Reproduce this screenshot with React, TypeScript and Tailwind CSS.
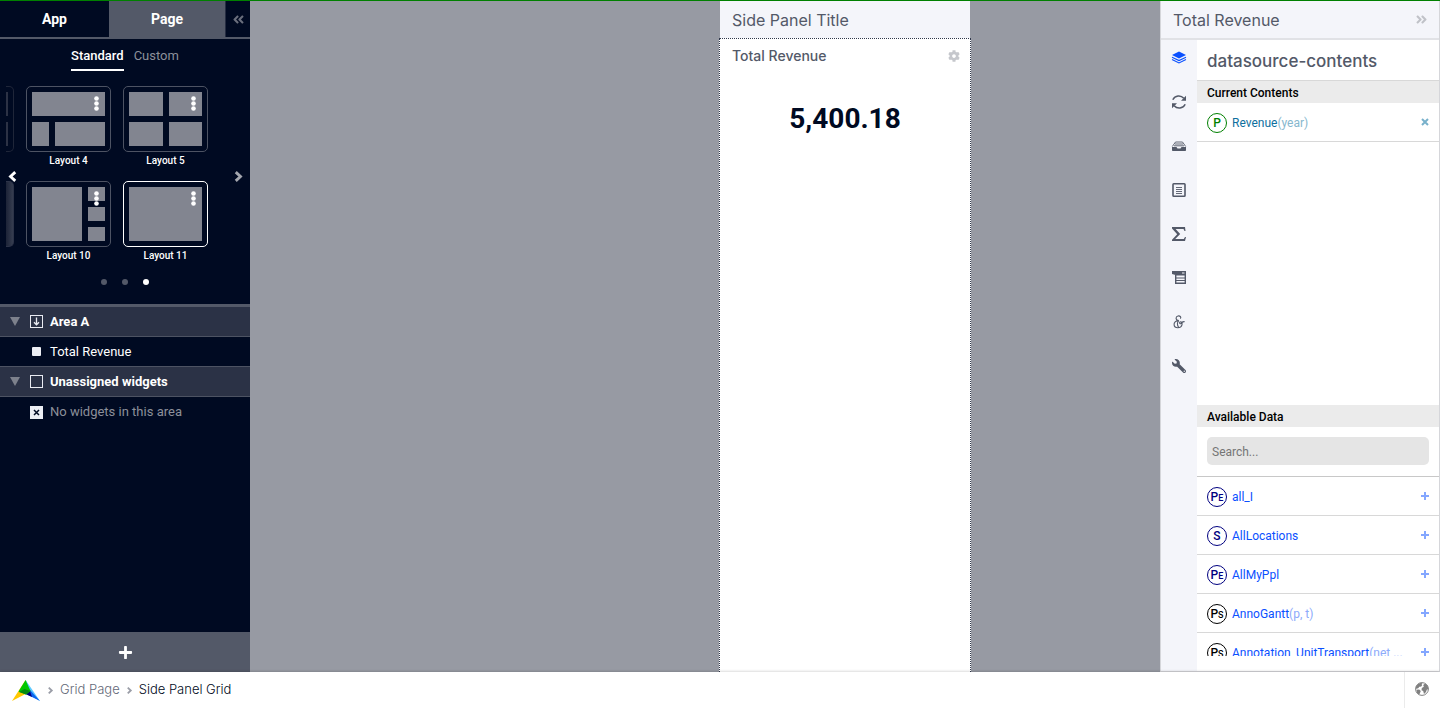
import React from 'react';
import { FaAngleDoubleLeft, FaAngleDoubleRight, FaCog, FaPlus, FaWrench } from 'react-icons/fa';

const DISPLAY = "font-[Inter,'Open_Sans',sans-serif]";

function Dots() {
  return (
    <svg width="5" height="15" viewBox="0 0 5 15" fill="#fff" className="absolute top-[9px] right-[11px]">
      <circle cx="2.5" cy="2.5" r="2.300" />
      <circle cx="2.5" cy="7.5" r="2.300" />
      <circle cx="2.5" cy="12.500" r="2.300" />
    </svg>
  );
}

function Chevron({ size, left }: { size: number; left?: boolean }) {
  return (
    <svg width={size} height={size} viewBox="0 0 10 10" fill="none" stroke="currentColor" strokeWidth="2.600">
      <path d={left ? 'M7.500 1L3.200 5 7.500 9' : 'M2.500 1L6.800 5 2.500 9'} />
    </svg>
  );
}

function LayoutCard({ name, selected, children }: { name: string; selected?: boolean; children: React.ReactNode }) {
  return (
    <button type="button" className="flex w-[85px] flex-col items-center">
      <span
        className={`relative flex h-[66px] w-full gap-[6px] rounded-[5px] border p-[5px] ${
          selected ? 'border-white' : 'border-[#4d5363]'
        }`}
      >
        {children}
        <Dots />
      </span>
      <span className="mt-px h-4 text-[10px] leading-4 font-medium text-white">{name}</span>
    </button>
  );
}

const block = 'bg-[#828590]';

function LayoutPicker() {
  return (
    <div className="flex h-[218px] shrink-0 flex-col">
      <div className="relative flex gap-3 pl-[6px]">
        <div className="flex w-2 flex-col gap-[29px] overflow-hidden">
          <div className="h-[66px] rounded-r-[5px] border border-l-0 border-[#1f2639] pt-[5px]">
            <div className="h-6 w-[2px] bg-[#2c3245]" />
            <div className="mt-[6px] h-6 w-[2px] bg-[#2c3245]" />
          </div>
          <div className="h-[66px] rounded-r-[5px] border border-l-0 border-[#2c3348] bg-gradient-to-r from-[#1c2337] to-[#363d50]" />
        </div>
        <div className="flex flex-col gap-3">
          <LayoutCard name="Layout 4">
            <span className="flex flex-1 flex-col gap-[6px]">
              <span className={`flex-1 ${block}`} />
              <span className="flex flex-1 gap-[6px]">
                <span className={`w-[17px] ${block}`} />
                <span className={`flex-1 ${block}`} />
              </span>
            </span>
          </LayoutCard>
          <LayoutCard name="Layout 10">
            <span className={`flex-1 ${block}`} />
            <span className="flex w-[17px] flex-col gap-[6px]">
              <span className={`flex-1 ${block}`} />
              <span className={`flex-1 ${block}`} />
              <span className={`flex-1 ${block}`} />
            </span>
          </LayoutCard>
        </div>
        <div className="flex flex-col gap-3">
          <LayoutCard name="Layout 5">
            <span className="grid w-[73px] grid-cols-2 gap-[6px]">
              <span className={block} />
              <span className={block} />
              <span className={block} />
              <span className={block} />
            </span>
          </LayoutCard>
          <LayoutCard name="Layout 11" selected>
            <span className={`flex-1 ${block}`} />
          </LayoutCard>
        </div>
        <button type="button" aria-label="Previous layouts" className="absolute top-[85px] left-[7px] text-white">
          <Chevron size={11} left />
        </button>
        <button type="button" aria-label="Next layouts" className="absolute top-[85px] right-[6px] text-[#a3a6ae]">
          <Chevron size={11} />
        </button>
      </div>
      <div className="mt-[15px] flex justify-center gap-[15px]">
        <button type="button" aria-label="Set 1" className="size-[6px] rounded-full bg-[#535968]" />
        <button type="button" aria-label="Set 2" className="size-[6px] rounded-full bg-[#535968]" />
        <button type="button" aria-label="Set 3" className="size-[6px] rounded-full bg-white" />
      </div>
    </div>
  );
}

function Triangle() {
  return (
    <svg width="10" height="10" viewBox="0 0 10 10" className="mr-[10px]">
      <path d="M0 0h10L5 9z" fill="#7d818c" />
    </svg>
  );
}

function Sidebar() {
  return (
    <aside className="flex w-[250px] shrink-0 flex-col bg-[#000a22] text-[13px] text-white">
      <div className="flex h-[38px] shrink-0 border-b-2 border-[#535968] text-sm font-bold">
        <button type="button" className="w-[109px]">App</button>
        <button type="button" className="w-[116px] bg-[#535968]">Page</button>
        <button type="button" aria-label="Collapse" className="flex flex-1 items-center justify-center border-l border-[#262d42] text-[#6a6f7d]">
          <FaAngleDoubleLeft size={13} />
        </button>
      </div>
      <div className="flex h-[47px] shrink-0 justify-center gap-[10px] leading-[33px]">
        <button type="button" className="h-8 border-b-2 border-white font-medium">Standard</button>
        <button type="button" className="h-8 text-[#8c909a]">Custom</button>
      </div>
      <LayoutPicker />
      <div className="flex flex-1 flex-col border-t-[3px] border-[#535968]">
        <div className="flex h-[30px] items-center border-b border-[#4d5363] bg-[#2b3246] pl-[10px] font-bold">
          <Triangle />
          <svg width="13" height="13" viewBox="0 0 13 13" className="mr-[7px]" fill="none" stroke="#e9ebf2">
            <rect x=".5" y=".5" width="12" height="12" />
            <path d="M6.500 2.500v7M4 7.200l2.500 2.600L9 7.200" strokeWidth="1.300" />
          </svg>
          Area A
        </div>
        <div className="flex h-[30px] items-center border-b border-[#4d5363] pl-8">
          <span className="mr-[9px] size-[9px] rounded-[1px] bg-[#eceef4]" />
          Total Revenue
        </div>
        <div className="flex h-[30px] items-center border-b border-[#4d5363] bg-[#2b3246] pl-[10px] font-bold">
          <Triangle />
          <span className="mr-[7px] size-[13px] border border-[#e9ebf2]" />
          Unassigned widgets
        </div>
        <div className="flex h-[30px] items-center pl-[30px] text-[#8c909a]">
          <span className="mr-[7px] flex size-[13px] items-center justify-center bg-[#eceef4] text-[#000a22]">
            <svg width="7" height="7" viewBox="0 0 7 7" stroke="currentColor" strokeWidth="1.500">
              <path d="M1 1l5 5M6 1L1 6" />
            </svg>
          </span>
          No widgets in this area
        </div>
      </div>
      <button type="button" aria-label="Add widget" className="flex h-10 shrink-0 items-center justify-center bg-[#535968]">
        <FaPlus size={15} />
      </button>
    </aside>
  );
}

function Canvas() {
  return (
    <main className="flex min-w-0 flex-1 justify-end bg-[#979aa3] pr-[189px]">
      <section className={`flex w-[252px] flex-col ${DISPLAY}`}>
        <h1 className="mx-px flex h-[37px] shrink-0 items-center bg-[#f4f5fa] px-3 text-base text-[#535968]">
          Side Panel Title
        </h1>
        <div className="flex-1 border border-b-0 border-dotted border-[#2f374b] bg-white">
          <div className="flex h-[34px] items-center justify-between pr-[10px] pl-3">
            <h2 className="text-sm font-medium text-[#535968]">Total Revenue</h2>
            <button type="button" aria-label="Widget settings" className="text-[#c5c7cc]">
              <FaCog size={12} />
            </button>
          </div>
          <p className="pt-[25px] text-center font-[Roboto,sans-serif] text-[28px] leading-[42px] font-bold text-[#000a22]">
            5,400.18
          </p>
        </div>
      </section>
    </main>
  );
}

function Ico({ children }: { children: React.ReactNode }) {
  return (
    <svg width="16" height="16" viewBox="0 0 16 16" fill="currentColor">
      {children}
    </svg>
  );
}

const tools: { name: string; icon: React.ReactNode }[] = [
  {
    name: 'Contents',
    icon: (
      <Ico>
        <path d="M8 1.500L15 5 8 8.500 1 5z" />
        <path d="M1 7.200L8 10.600 15 7.200M1 9.500L8 12.900 15 9.500" fill="none" stroke="currentColor" strokeWidth="1.100" />
      </Ico>
    ),
  },
  {
    name: 'Refresh',
    icon: (
      <Ico>
        <path d="M1.800 5.800C4 1.200 9.800.8 12.800 4.300M14.200 10.200C12 14.800 6.200 15.200 3.200 11.700" fill="none" stroke="currentColor" strokeWidth="1.500" />
        <path d="M15 1.800v5h-5zM1 14.200v-5h5z" />
      </Ico>
    ),
  },
  {
    name: 'Storage',
    icon: (
      <Ico>
        <path d="M1 9h4.500l1 1.500h3l1-1.500H15v3.200q0 .8-.8.800H1.800q-.8 0-.8-.8z" />
        <path d="M1.300 8.500L4.500 4h7l3.200 4.500M3 7.800h10M4 6h8" fill="none" stroke="currentColor" strokeWidth=".9" />
      </Ico>
    ),
  },
  {
    name: 'Document',
    icon: (
      <Ico>
        <rect x="2" y="1.800" width="12" height="12.400" rx=".7" fill="none" stroke="currentColor" strokeWidth="1.600" />
        <path d="M5 5.500h6M5 7.500h6M5 9.500h6M5 11.500h6" stroke="currentColor" strokeWidth=".9" />
      </Ico>
    ),
  },
  {
    name: 'Totals',
    icon: (
      <Ico>
        <path d="M1 1h13l.5 4h-1l-1-2H4.600L9.200 8l-5 5h8.600l1.200-2h1L14 15H1v-1.300L6.200 8.300 1 2.500z" />
      </Ico>
    ),
  },
  {
    name: 'Menu',
    icon: (
      <Ico>
        <path d="M1 1h14v4.500H4.500V5L1 4z" />
        <path d="M4.700 5v8.300h9.600V5" fill="none" stroke="currentColor" strokeWidth="1.400" />
        <path d="M5 8h9M5 10.500h9" stroke="currentColor" strokeWidth="1.100" />
        <path d="M11 3h2.500" stroke="#f4f5fa" strokeWidth="1" />
      </Ico>
    ),
  },
  {
    name: 'Conditions',
    icon: (
      <Ico>
        <path
          d="M9.400 4.600C10.600 2.800 8.800 1.600 7 2 4.600 2.500 4 5.800 7.800 6.600 4.600 6.600 2.800 8.600 3.100 10.900 3.500 14.600 9.800 14.800 11 10.800 11.500 8.800 10.300 7.300 9.100 8 8.200 8.600 8.600 9.900 9.600 9.700 11 9.400 10.600 7.300 13.600 7.600M7.800 6.600C6 8.200 6 11.500 7.600 13"
          fill="none"
          stroke="currentColor"
          strokeWidth="1.100"
        />
      </Ico>
    ),
  },
  { name: 'Advanced', icon: <FaWrench size={14} className="-scale-x-100" /> },
];

function Badge({ main, sub, tone }: { main: string; sub?: string; tone: string }) {
  return (
    <span className={`flex size-5 shrink-0 items-center justify-center rounded-full border text-xs leading-none font-medium ${tone}`}>
      <span>
        {main}
        {sub && <span className="text-[9px]">{sub}</span>}
      </span>
    </span>
  );
}

const available = [
  { main: 'P', sub: 'E', tone: 'border-[#000080] text-[#000080]', name: 'all_I', args: '' },
  { main: 'S', sub: '', tone: 'border-[#000080] text-[#000080]', name: 'AllLocations', args: '' },
  { main: 'P', sub: 'E', tone: 'border-[#000080] text-[#000080]', name: 'AllMyPpl', args: '' },
  { main: 'P', sub: 'S', tone: 'border-black text-black', name: 'AnnoGantt', args: '(p, t)' },
  { main: 'P', sub: 'S', tone: 'border-black text-black', name: 'Annotation_UnitTransport', args: '(net ...' },
];

const row = 'flex h-[39px] items-center gap-[5px] border-b border-[#d8d8d8] px-[10px] pt-[2px]';

function Inspector() {
  return (
    <aside className="flex w-[280px] shrink-0 flex-col border-x border-b border-[#d5d6da] bg-white text-xs">
      <header className={`flex h-[39px] shrink-0 items-center justify-between border-b-2 border-[#e1e2e6] bg-[#f4f5fa] pr-[11px] pl-3 text-base text-[#535968] ${DISPLAY}`}>
        Total Revenue
        <button type="button" aria-label="Collapse" className="text-[#c0c2c8]">
          <FaAngleDoubleRight size={13} />
        </button>
      </header>
      <div className="flex min-h-0 flex-1">
        <nav className="flex w-9 shrink-0 flex-col items-center gap-7 bg-[#f4f5fa] pt-[10px] text-[#535968]">
          {tools.map((t, i) => (
            <button key={t.name} type="button" aria-label={t.name} className={`flex size-4 items-center justify-center ${i === 0 ? 'text-[#0a50ff]' : ''}`}>
              {t.icon}
            </button>
          ))}
        </nav>
        <div className="flex min-w-0 flex-1 flex-col pb-[15px]">
          <h2 className={`flex h-[41px] shrink-0 items-center border-b border-[#d8d8d8] px-[10px] pt-[2px] text-[17px] font-medium text-[#535968] ${DISPLAY}`}>
            datasource-contents
          </h2>
          <h3 className="h-[22px] shrink-0 bg-[#ebebeb] px-[10px] leading-6 font-medium text-black">Current Contents</h3>
          <ul className="min-h-0 flex-1">
            <li className={row}>
              <Badge main="P" tone="border-[#008000] text-[#008000]" />
              <a href="#revenue" className="text-[#0e6f9e]">
                Revenue<span className="text-[#86b7ce]">(year)</span>
              </a>
              <button type="button" aria-label="Remove Revenue" className="mb-[2px] ml-auto text-[#78b1cb]">
                <svg width="8" height="8" viewBox="0 0 8 8" stroke="currentColor" strokeWidth="2">
                  <path d="M1 1l6 6M7 1L1 7" />
                </svg>
              </button>
            </li>
          </ul>
          <h3 className="h-[22px] shrink-0 bg-[#ebebeb] px-[10px] leading-6 font-medium text-black">Available Data</h3>
          <div className="shrink-0 border-b border-[#c8c8c8] px-[10px] pt-[10px] pb-[11px]">
            <input
              type="text"
              aria-label="Search available data"
              placeholder="Search..."
              className="block h-7 w-full rounded-[5px] bg-[#e5e5e5] px-[5px] pt-[2px] placeholder:text-[#757575]"
            />
          </div>
          <ul className="h-[179px] shrink-0 overflow-hidden">
            {available.map((a) => (
              <li key={a.name} className={row}>
                <Badge main={a.main} sub={a.sub} tone={a.tone} />
                <a href={`#${a.name}`} className="whitespace-nowrap text-[#0a50ff]">
                  {a.name}
                  <span className="text-[#8dabfb]">{a.args}</span>
                </a>
                <button type="button" aria-label={`Add ${a.name}`} className="mb-[3px] ml-auto text-[#84a7ff]">
                  <svg width="8" height="8" viewBox="0 0 8 8" stroke="currentColor" strokeWidth="2">
                    <path d="M4 0v8M0 4h8" />
                  </svg>
                </button>
              </li>
            ))}
          </ul>
        </div>
      </div>
    </aside>
  );
}

function Logo() {
  return (
    <svg width="28" height="21" viewBox="0 0 28 21">
      <path d="M13.600 0L0 21l13.500-7z" fill="#ffc800" />
      <path d="M13.600 0L28 21l-10-6z" fill="#5cc8ff" />
      <path d="M18 10l10 11-14-7z" fill="#0a64f0" />
      <path d="M13.500 14l4.500-3 2 6z" fill="#000080" />
      <path d="M13.600 0L6.500 11.500 14 14.500 18.500 11z" fill="#00c800" />
      <path d="M12.500 9l-5.500 3 7 2.500 4.500-3.500z" fill="#078a10" />
    </svg>
  );
}

function Footer() {
  return (
    <footer className={`relative flex h-9 shrink-0 items-center bg-white pl-3 text-[13px] text-[#7b7f8b] shadow-[0_0_3px_rgba(0,0,0,0.25)] ${DISPLAY}`}>
      <a href="#home" aria-label="Home"><Logo /></a>
      <span className="mr-[6px] ml-[7px] text-[#9a9da7]"><Chevron size={7} /></span>
      <a href="#grid" className="font-light text-[#636877]">Grid Page</a>
      <span className="mx-[6px] text-[#9a9da7]"><Chevron size={7} /></span>
      <a href="#side-panel" className="font-light text-[#000a22]">Side Panel Grid</a>
      <button type="button" aria-label="Language" className="ml-auto flex h-full w-9 items-center justify-center border-l border-[#ebebeb] pr-[2px] text-[#808080]">
        <svg width="14" height="14" viewBox="0 0 14 14" className="-translate-y-px">
          <circle cx="7" cy="7" r="6.400" fill="#fff" stroke="currentColor" strokeWidth="1" />
          <path d="M1 4.500L3 2 6 .8l1.500.8L6.500 3l.8.800-1.800.9L4.200 4.800 3.500 6 1.800 6.800.8 6.500zM1.500 7.800l2.700-.3L5.800 9 5 11l-.8 1.800L2 11z" fill="currentColor" />
          <path d="M8.200 3L10 1.500l2.500 1.700L13.500 7l-1.700.8L11 10l-2 2-.8-3-1.700-.7L6.800 6 8.800 4.800z" fill="currentColor" />
        </svg>
      </button>
    </footer>
  );
}

export default function App() {
  return (
    <div className="h-screen min-h-[560px] bg-white pr-[5px] font-[Roboto,sans-serif]">
      <div className="flex h-full flex-col overflow-hidden border-t border-[#008000]">
        <div className="flex min-h-0 flex-1">
          <Sidebar />
          <Canvas />
          <Inspector />
        </div>
        <Footer />
      </div>
    </div>
  );
}
